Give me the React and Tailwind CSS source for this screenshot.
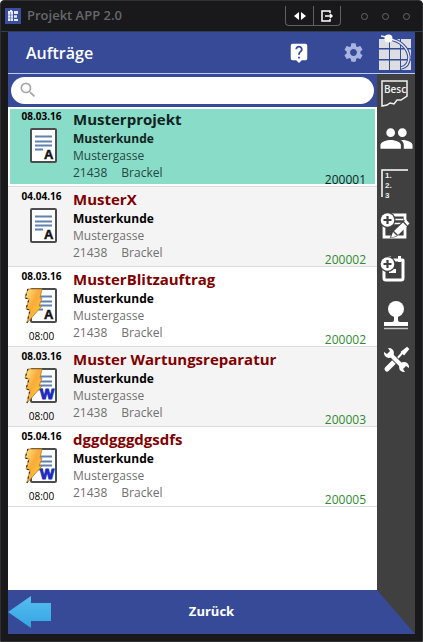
import { useState } from "react";
import { MdLiveHelp, MdPeople, MdSearch, MdSettings } from "react-icons/md";

const ORDERS = [
  { id: 1, date: "08.03.16", time: "", title: "Musterprojekt", type: "A", urgent: false, number: "200001" },
  { id: 2, date: "04.04.16", time: "", title: "MusterX", type: "A", urgent: false, number: "200002" },
  { id: 3, date: "08.03.16", time: "08:00", title: "MusterBlitzauftrag", type: "A", urgent: true, number: "200002" },
  { id: 4, date: "08.03.16", time: "08:00", title: "Muster Wartungsreparatur", type: "W", urgent: true, number: "200003" },
  { id: 5, date: "05.04.16", time: "08:00", title: "dggdgggdgsdfs", type: "W", urgent: true, number: "200005" },
];

function AppIcon() {
  return (
    <svg width="16" height="16" viewBox="0 0 16 16">
      <rect width="16" height="16" fill="#3b4fa0" />
      <path d="M3 3h2V2h2v1h1v10H3zM9 3h4v3H9zM9 7h3v3H9zM9 11h4v2H9z" fill="#e8ebf5" />
      <path d="M3 7h10M3 10h10M5.5 4v9" stroke="#3b4fa0" strokeWidth="0.5" />
    </svg>
  );
}

function LogoIcon() {
  return (
    <svg width="36" height="40" viewBox="0 0 36 40">
      <g fill="#dcdee2">
        <path d="M1 6h10v9H1zM12 6h10v9H12zM23 6h10v9H23z" />
        <path d="M1 16.5h10V26H1zM12 16.5h10V26H12zM23 16.5h10V26H23z" />
        <path d="M1 27.5h10V37H1zM12 27.5h10V37H12zM23 27.5h10V37H23z" />
      </g>
      <path d="M11 6c11 1 19 9 20 18 0 6-3 10-8 11" fill="none" stroke="#34489a" strokeWidth="3.5" />
      <path d="M3 3q4 0 8 3c11 1 19 9 20 18 0 6-3 10-8 11" fill="none" stroke="#e8ebf5" strokeWidth="1.5" />
      <circle cx="10.5" cy="5.5" r="4" fill="#fff" />
    </svg>
  );
}

// Document with a letter in the corner, urgent orders get a lightning bolt
function OrderIcon({ type, urgent }) {
  return (
    <svg width="36" height="38" viewBox="0 0 36 38">
      <defs>
        <linearGradient id="bolt" x1="0" y1="0" x2="1" y2="1">
          <stop offset="0" stopColor="#ffe88a" />
          <stop offset="0.45" stopColor="#f9a93a" />
          <stop offset="1" stopColor="#ffdc2e" />
        </linearGradient>
      </defs>
      <rect x="7" y="2" width="25" height="33" rx="1" fill="#fff" stroke="#4c4c4c" strokeWidth="2" />
      <path d="M11 9.5h17M11 14.5h17M11 18.5h17M11 22.5h8" stroke="#5f82b0" strokeWidth="2" />
      <text
        x={type === "W" ? 16 : 20}
        y="32"
        fontFamily="Liberation Sans"
        fontSize={type === "W" ? 15 : 13}
        fontWeight="bold"
        fill={type === "W" ? "#1a2bc0" : "#111"}
        stroke={type === "W" ? "#1a2bc0" : "#111"}
        strokeWidth={type === "W" ? 1 : 0.5}
      >
        {type}
      </text>
      {urgent && (
        <>
          <path
            d="M4 2h14l-2 9h2l-3 8h3l-8 9-7 8 3-13-4-1 3-10-4-1z"
            fill="url(#bolt)"
            stroke="#b87a24"
            strokeWidth="0.8"
          />
          <path
            d="M4 2L1 11l4 1-3 10 4 1-3 13"
            fill="none"
            stroke="#3d2a10"
            strokeWidth="1.2"
            strokeDasharray="2 3"
          />
        </>
      )}
    </svg>
  );
}

function DescriptionIcon() {
  return (
    <svg width="38" height="36" viewBox="0 0 38 36">
      <path d="M30 20V5H5v25l5-1 3-2 4 1 3-4 4 0 6-4z" fill="none" stroke="#f0f0f0" strokeWidth="1.5" />
      <text x="7" y="17" fontFamily="Open Sans" fontSize="10" fontWeight="600" fill="#f0f0f0">
        Besc
      </text>
    </svg>
  );
}

function PositionsIcon() {
  return (
    <svg width="38" height="36" viewBox="0 0 38 36">
      <path d="M31 6H5v27" fill="none" stroke="#fff" strokeWidth="1.5" />
      <g fontFamily="Liberation Sans" fontSize="8" fontWeight="700" fill="#eee">
        <text x="8" y="14">1.</text>
        <text x="8" y="24">2.</text>
        <text x="8" y="34">3</text>
      </g>
    </svg>
  );
}

function AddBadge() {
  return (
    <>
      <circle cx="10.5" cy="12" r="8" fill="#404041" />
      <circle cx="10.5" cy="12" r="6.8" fill="#fff" />
      <path d="M10.5 8v8M6.5 12h8" stroke="#404041" strokeWidth="2.2" />
    </>
  );
}

function AddNoteIcon() {
  return (
    <svg width="38" height="36" viewBox="0 0 38 36">
      <path d="M12 7h16v22H7V16" fill="none" stroke="#fff" strokeWidth="2.8" />
      <path d="M17 11.5h9M17 15.5h8" stroke="#fff" strokeWidth="1.5" />
      <path d="M13 30l2-7L27 12l5 4-13 13z" fill="#404041" />
      <path d="M14 29.5l2-5.5 4 4zM17 23l9-8.5 4 4L21 27zM27 13.5l2-2 3.500 4-2 2z" fill="#fff" />
      <AddBadge />
    </svg>
  );
}

function AddEventIcon() {
  return (
    <svg width="38" height="36" viewBox="0 0 38 36">
      <path d="M7 16v10q0 2 2 2h15q2 0 2-2V8H14" fill="none" stroke="#fff" strokeWidth="3" strokeLinejoin="round" />
      <path d="M11 4h3v6h-3zM21 4h3v6h-3z" fill="#fff" />
      <path d="M12 17h7v4h-7z" fill="#fff" />
      <AddBadge />
    </svg>
  );
}

function StampIcon() {
  return (
    <svg width="38" height="36" viewBox="0 0 38 36">
      <circle cx="19" cy="13" r="8" fill="#fff" />
      <path d="M17 19h4v5q0 2 2 2h-8q2 0 2-2z" fill="#fff" />
      <path d="M7 26h24v4H7z" fill="#fff" />
      <path d="M7 32.5h24" stroke="#c4c4c4" strokeWidth="1.5" />
    </svg>
  );
}

function ToolsIcon() {
  return (
    <svg width="38" height="36" viewBox="0 0 38 36">
      <path d="M10 29l7-7" stroke="#fff" strokeWidth="5" strokeLinecap="round" />
      <path d="M18 21l9-10" stroke="#fff" strokeWidth="2" />
      <path d="M25 12l5-4 1 1-4 5z" fill="#fff" stroke="#fff" strokeWidth="2" />
      <path d="M14 15l12 12" stroke="#404041" strokeWidth="6" />
      <path d="M14 15l12 12" stroke="#fff" strokeWidth="4" />
      <path d="M11 8a5 5 0 1 1-4 4l3 2 3-3zM28 32a5 5 0 1 1 4-4l-3-2-3 3z" fill="#fff" />
    </svg>
  );
}

const TOOLS = [
  { name: "Beschreibung", icon: <DescriptionIcon /> },
  { name: "Kunden", icon: <MdPeople size={35} /> },
  { name: "Positionen", icon: <PositionsIcon /> },
  { name: "Notiz hinzufügen", icon: <AddNoteIcon /> },
  { name: "Termin hinzufügen", icon: <AddEventIcon /> },
  { name: "Stempel", icon: <StampIcon /> },
  { name: "Werkzeuge", icon: <ToolsIcon /> },
];

function TitleBar() {
  return (
    <div className="flex h-[31px] items-center border-b border-[#303c58] pr-3 pl-1">
      <AppIcon />
      <span className="ml-[6px] flex-1 text-[13px] font-semibold text-[#66676a]">Projekt APP 2.0</span>
      <div className="mr-5 flex h-5 rounded-b border border-t-0 border-[#606062] text-white">
        <button aria-label="Breite ändern" className="flex w-7 items-center justify-center border-r border-[#606062]">
          <svg width="14" height="10" viewBox="0 0 14 10" fill="currentColor">
            <path d="M6 1v8L1 5zM8 1v8l5-4z" />
          </svg>
        </button>
        <button aria-label="Abmelden" className="flex w-[26px] items-center justify-center">
          <svg width="12" height="12" viewBox="0 0 12 12" fill="none" stroke="currentColor" strokeWidth="1.5">
            <path d="M9 3V1H1v10h8V9M4 6h7M9 4l2 2-2 2" />
          </svg>
        </button>
      </div>
      <div className="flex gap-[14px]">
        <button aria-label="Minimieren" className="size-[7px] rounded-full border border-[#66676a]" />
        <button aria-label="Maximieren" className="size-[7px] rounded-full border border-[#66676a]" />
        <button aria-label="Schließen" className="size-[7px] rounded-full border border-[#66676a]" />
      </div>
    </div>
  );
}

function OrderRow({ order, active, striped, onSelect }) {
  let background = striped ? "bg-[#f4f4f4]" : "bg-white";
  if (active) background = "bg-[#89dcc8] ring-2 ring-inset ring-white";

  return (
    <li className="border-b border-[#dcdcdc]">
      <button onClick={onSelect} className={`flex h-[79px] w-full text-left ${background}`}>
        <span className="flex w-[65px] shrink-0 flex-col items-center pt-[2px] pl-[2px] text-[10px] leading-[14px] text-black">
          <span className="font-bold">{order.date}</span>
          <span className="my-1">
            <OrderIcon type={order.type} urgent={order.urgent} />
          </span>
          <span>{order.time}</span>
        </span>
        <span className={`flex-1 text-xs leading-[17px] ${active ? "text-[#24473f]" : "text-[#707070]"}`}>
          <span className={`block pt-[1px] text-[15px] leading-[22px] font-bold ${active ? "text-[#10231f]" : "text-[#800000]"}`}>
            {order.title}
          </span>
          <span className={`block font-bold ${active ? "text-[#10231f]" : "text-black"}`}>Musterkunde</span>
          <span className="block">Mustergasse</span>
          <span className="flex gap-[14px]">
            <span>21438</span>
            <span>Brackel</span>
          </span>
        </span>
        <span className={`self-end pr-[11px] text-xs leading-3 ${active ? "text-[#10231f]" : "text-[#2e8b2e]"}`}>
          {order.number}
        </span>
      </button>
    </li>
  );
}

export default function App() {
  const [selected, setSelected] = useState(1);
  const [query, setQuery] = useState("");

  const orders = ORDERS.filter((o) => o.title.toLowerCase().includes(query.toLowerCase()));

  return (
    <div className="flex min-h-screen flex-col rounded-t border border-[#303032] bg-[#19191b] font-['Open_Sans','Noto_Sans',sans-serif]">
      <TitleBar />

      <div className="mx-[7px] mb-[7px] flex flex-1 flex-col bg-[#374a98]">
        {/* HEADER */}
        <header className="flex h-[42px] items-center border-b border-[#b9cdf0] pr-[1px] pl-[18px] text-white">
          <h1 className="flex-1 text-base font-semibold">Aufträge</h1>
          <button aria-label="Hilfe" className="mr-8">
            <MdLiveHelp size={22} />
          </button>
          <button aria-label="Einstellungen" className="mr-[13px] text-[#a9b5e0]">
            <MdSettings size={23} />
          </button>
          <LogoIcon />
        </header>

        <div className="flex flex-1">
          {/* ORDERS */}
          <main className="flex flex-1 flex-col">
            <div className="relative px-[3px] py-[3px]">
              <input
                type="text"
                aria-label="Suchen"
                value={query}
                onChange={(e) => setQuery(e.target.value)}
                className="block h-[27px] w-full rounded-full bg-white pr-4 pl-8 text-sm outline-none"
              />
              <MdSearch size={20} stroke="currentColor" className="absolute top-[6px] left-[10px] text-[#a8a8a8]" />
            </div>
            <ul className="flex-1 bg-white">
              {orders.map((order, index) => (
                <OrderRow
                  key={order.id}
                  order={order}
                  active={order.id === selected}
                  striped={index % 2 === 1}
                  onSelect={() => setSelected(order.id)}
                />
              ))}
            </ul>
          </main>

          {/* TOOLS */}
          <nav className="flex w-[38px] flex-col gap-2 bg-[#404041] pt-[2px] text-white">
            {TOOLS.map((tool) => (
              <button key={tool.name} aria-label={tool.name} className="flex h-9 items-center justify-center">
                {tool.icon}
              </button>
            ))}
          </nav>
        </div>

        {/* FOOTER */}
        <footer className="bg-[#404041]">
          <button className="grid h-11 w-full grid-cols-[1fr_auto_1fr] items-center bg-[#374a98] text-[13px] font-bold text-white [clip-path:polygon(0_0,calc(100%-38px)_0,100%_100%,0_100%)]">
            <svg width="44" height="34" viewBox="0 0 44 34">
              <defs>
                <linearGradient id="back" x1="0" y1="0" x2="0" y2="1">
                  <stop offset="0" stopColor="#56bdf0" />
                  <stop offset="1" stopColor="#35a5e2" />
                </linearGradient>
              </defs>
              <path d="M0 17L23 1v7h20v18H23v7z" fill="url(#back)" />
            </svg>
            Zurück
          </button>
        </footer>
      </div>
    </div>
  );
}
